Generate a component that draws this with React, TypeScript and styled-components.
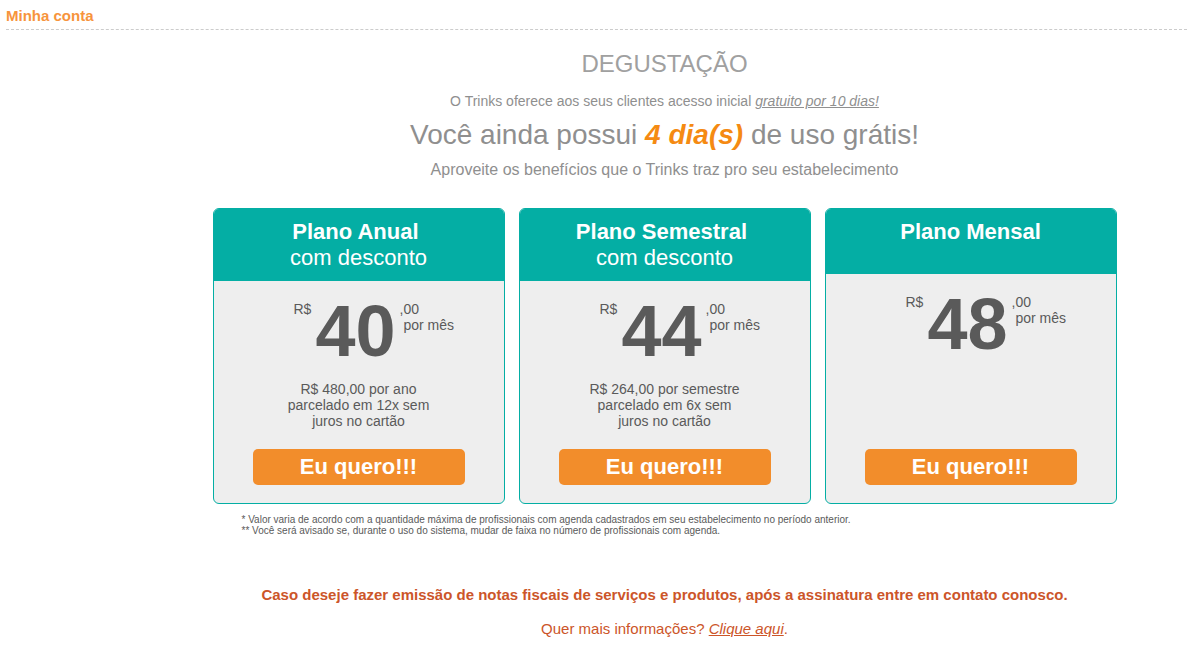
import React from "react";
import styled, { createGlobalStyle } from "styled-components";

const GlobalStyle = createGlobalStyle`
  *, *::before, *::after { box-sizing: border-box; }
  body {
    margin: 0;
    background: #fff;
    color: #5a5a5a;
    font: 14px/16px "Liberation Sans", Arial, sans-serif;
  }
  h1, h2, h3, p { margin: 0; font-weight: normal; }
`;

const Page = styled.div`
  padding-left: 6px;
`;

const PageTitle = styled.h1`
  padding: 7px 0 4px;
  border-bottom: 1px dashed #ccc;
  color: #f7943c;
  font-size: 15px;
  line-height: 18px;
  font-weight: bold;
`;

const Content = styled.main`
  margin-left: 136px;
  padding: 20px 0 7px;
`;

const Intro = styled.section`
  color: #8f8f8f;
  text-align: center;
`;

const IntroTitle = styled.h2`
  color: #a0a0a0;
  font-size: 24px;
  line-height: 28px;
`;

const TrialTerms = styled.p`
  margin-top: 15px;
`;

const UnderlinedEm = styled.em`
  text-decoration: underline;
`;

const Remaining = styled.p`
  margin-top: 9px;
  font-size: 28px;
  line-height: 34px;
`;

const Days = styled.em`
  color: #f58a12;
  font-weight: bold;
`;

const Benefits = styled.p`
  margin-top: 9px;
  font-size: 16px;
  line-height: 18px;
`;

const Plans = styled.section`
  width: fit-content;
  margin: 29px auto 0;
`;

const PlanList = styled.div`
  display: grid;
  grid-template-columns: repeat(3, 292px);
  gap: 14px;
`;

const Card = styled.article`
  display: flex;
  flex-direction: column;
  min-height: 296px;
  overflow: hidden;
  border: 1px solid #04aea4;
  border-radius: 6px;
  background: #eee;
`;

const CardHeader = styled.header`
  min-height: 65px;
  padding: 10px;
  background: #04aea4;
  color: #fff;
  font-size: 22px;
  line-height: 26px;
  text-align: center;
`;

const PlanName = styled.h3`
  font-size: 22px;
  font-weight: bold;
`;

const Price = styled.div`
  display: flex;
  gap: 4px;
  padding: 20px 0 0 80px;
`;

const Amount = styled.strong`
  font-size: 72px;
  line-height: 60px;
`;

const Period = styled.span`
  white-space: pre;
`;

const Terms = styled.p`
  margin-top: 20px;
  text-align: center;
  white-space: pre-line;
`;

const BuyButton = styled.button`
  height: 36px;
  margin: auto 39px 18px;
  padding: 0;
  border: 0;
  border-radius: 5px;
  background: #f28d2b;
  color: #fff;
  font: bold 22px/36px "Liberation Sans", Arial, sans-serif;
  cursor: pointer;
`;

const Notes = styled.div`
  margin: 10px 0 0 29px;
  font-size: 10px;
  line-height: 11px;
`;

const Contact = styled.section`
  margin-top: 50px;
  color: #cc5529;
  font-size: 15px;
  line-height: 18px;
  text-align: center;
`;

const Invoice = styled.p`
  font-weight: bold;
`;

const MoreInfo = styled.p`
  margin-top: 16px;
`;

const InfoLink = styled.a`
  color: inherit;
  font-style: italic;
`;

interface Plan {
  name: string;
  discount?: string;
  amount: string;
  terms?: string;
}

const plans: Plan[] = [
  {
    name: "Plano Anual\u00a0",
    discount: "com desconto",
    amount: "40",
    terms: "R$ 480,00 por ano\nparcelado em 12x sem\njuros no cartão",
  },
  {
    name: "Plano Semestral\u00a0",
    discount: "com desconto",
    amount: "44",
    terms: "R$ 264,00 por semestre\nparcelado em 6x sem\njuros no cartão",
  },
  { name: "Plano Mensal", amount: "48" },
];

function PlanCard({ name, discount, amount, terms }: Plan) {
  return (
    <Card>
      <CardHeader>
        <PlanName>{name}</PlanName>
        {discount}
      </CardHeader>
      <Price>
        <span>R$</span>
        <Amount>{amount}</Amount>
        <Period>{",00\n por mês"}</Period>
      </Price>
      {terms && <Terms>{terms}</Terms>}
      <BuyButton type="button">Eu quero!!!</BuyButton>
    </Card>
  );
}

export default function App() {
  return (
    <>
      <GlobalStyle />
      <Page>
        <PageTitle>Minha conta</PageTitle>
        <Content>
          <Intro>
            <IntroTitle>DEGUSTAÇÃO</IntroTitle>
            <TrialTerms>
              O Trinks oferece aos seus clientes acesso inicial{" "}
              <UnderlinedEm>gratuito por 10 dias!</UnderlinedEm>
            </TrialTerms>
            <Remaining>
              Você ainda possui <Days>4 dia(s)</Days> de uso grátis!
            </Remaining>
            <Benefits>
              Aproveite os benefícios que o Trinks traz pro seu estabelecimento
            </Benefits>
          </Intro>
          <Plans>
            <PlanList>
              {plans.map((plan) => (
                <PlanCard key={plan.name} {...plan} />
              ))}
            </PlanList>
            <Notes>
              <p>
                * Valor varia de acordo com a quantidade máxima de profissionais
                com agenda cadastrados em seu estabelecimento no período
                anterior.
              </p>
              <p>
                ** Você será avisado se, durante o uso do sistema, mudar de
                faixa no número de profissionais com agenda.
              </p>
            </Notes>
          </Plans>
          <Contact>
            <Invoice>
              Caso deseje fazer emissão de notas fiscais de serviços e produtos,
              após a assinatura entre em contato conosco.
            </Invoice>
            <MoreInfo>
              Quer mais informações? <InfoLink href="#">Clique aqui</InfoLink>.
            </MoreInfo>
          </Contact>
        </Content>
      </Page>
    </>
  );
}
